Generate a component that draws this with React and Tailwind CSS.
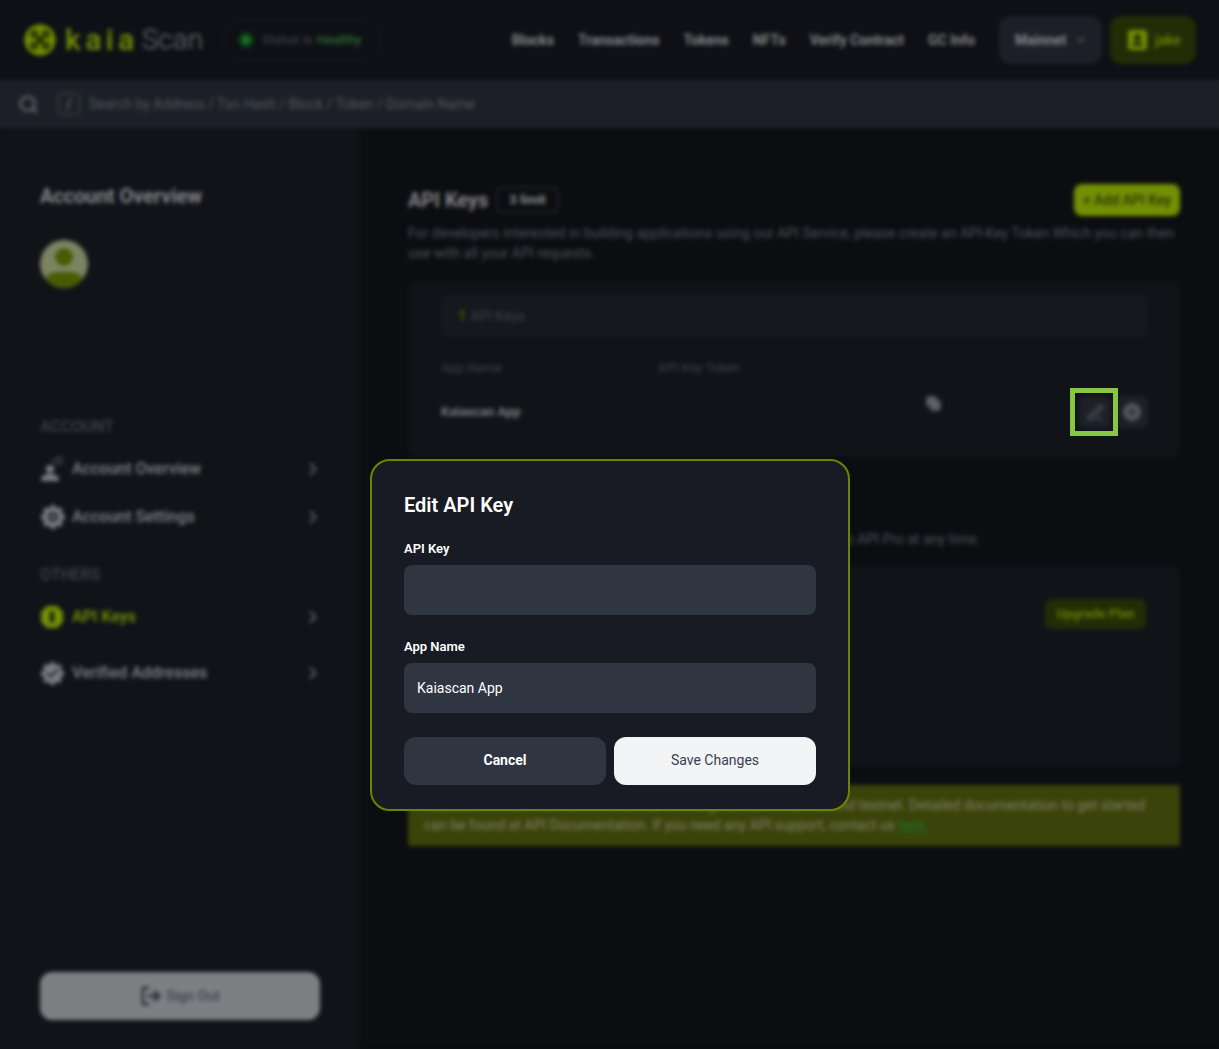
import React from 'react';
import { Search, ChevronRight, ChevronDown, Copy, PenLine, LogOut, Check } from 'lucide-react';

const NAV_LINKS = ['Blocks', 'Transactions', 'Tokens', 'NFTs', 'Verify Contract', 'GC Info'];
const GEAR_TEETH = [0, 45, 90, 135];

const KaiaMark = () => (
  <svg width="32" height="32" viewBox="0 0 32 32" className="shrink-0">
    <circle cx="16" cy="16" r="15.500" fill="#bff009" />
    <path d="M10 10l12 12M22 10L10 22" stroke="#2f3a06" strokeWidth="3" />
    <g fill="#2f3a06">
      <circle cx="10" cy="10" r="4" />
      <circle cx="22" cy="10" r="4" />
      <circle cx="10" cy="22" r="4" />
      <circle cx="22" cy="22" r="4" />
    </g>
    <g fill="#bff009">
      <circle cx="10" cy="10" r="1.600" />
      <circle cx="22" cy="10" r="1.600" />
      <circle cx="10" cy="22" r="1.600" />
      <circle cx="22" cy="22" r="1.600" />
    </g>
  </svg>
);

const AccountIcon = () => (
  <svg width="24" height="26" viewBox="0 0 24 26" fill="#d1d5db" className="shrink-0">
    <circle cx="10" cy="13" r="4" />
    <path d="M1 25c0-5 3-7 9-7s9 2 9 7z" />
    <path d="M12 6c3-3 6-4 11-4M15 9c2-1.600 4-2.500 8-2.500" fill="none" stroke="#9ca3af" strokeWidth="1.500" />
  </svg>
);

// Solid cog: body, four crossing bars for the teeth, dark ring in the middle
const GearIcon = ({ size = 26, fill = '#d1d5db', hole = '#1c2028' }) => (
  <svg width={size} height={size} viewBox="0 0 26 26" className="shrink-0">
    <circle cx="13" cy="13" r="9.500" fill={fill} />
    {GEAR_TEETH.map((angle) => (
      <rect key={angle} x="10.500" y="1" width="5" height="24" rx="1" fill={fill} transform={`rotate(${angle} 13 13)`} />
    ))}
    <circle cx="13" cy="13" r="5" fill={hole} />
    <circle cx="13" cy="13" r="2.500" fill={fill} />
  </svg>
);

const KeyBadge = () => (
  <svg width="24" height="24" viewBox="0 0 24 24" className="shrink-0">
    <path d="M7 1h10l6 6v10l-6 6H7l-6-6V7z" fill="#bff009" />
    <rect x="10" y="6" width="4" height="12" rx="2" fill="#1c2028" />
  </svg>
);

const VerifiedIcon = () => (
  <span className="relative w-6 h-6 flex items-center justify-center shrink-0">
    <GearIcon size={25} hole="#d1d5db" />
    <Check size={15} strokeWidth={3} className="absolute text-[#1c2028]" />
  </span>
);

const SideItem = ({ icon, label, active, className = '' }) => (
  <div className={`flex items-center h-6 ${className}`}>
    <div className="w-[32px] flex items-center">{icon}</div>
    <span className={`text-base font-medium ${active ? 'text-[#bff009]' : 'text-[#d1d5db]'}`}>{label}</span>
    <ChevronRight size={20} strokeWidth={2.5} className="ml-auto mr-[-3px] text-[#9ca3af]" />
  </div>
);

const Header = () => (
  <header className="h-20 bg-[#181b23] flex items-center pl-6 pr-[23px] shrink-0">
    <KaiaMark />
    <span className="ml-[9px] text-[30px] leading-none font-medium tracking-[4.500px] text-[#bff009]">kaia</span>
    <span className="ml-[3px] text-[28px] leading-none font-light text-[#b5b8bd]">Scan</span>
    <div className="ml-[20px] h-[42px] w-[158px] rounded-full border border-[#2a2e38] flex items-center pl-[14px] text-[13px] font-medium">
      <span className="w-4 h-4 rounded-full bg-[#14611f] mr-2 shrink-0 flex items-center justify-center">
        <span className="w-2 h-2 rounded-full bg-[#2fc043]" />
      </span>
      <span className="text-[#5b6472] mr-1">Status is</span>
      <span className="text-[#4caf50]">Healthy</span>
    </div>
    <nav className="ml-auto flex items-center gap-[24px] text-[14px] font-semibold text-[#e5e7eb]">
      {NAV_LINKS.map((link) => (
        <a key={link}>{link}</a>
      ))}
    </nav>
    <div className="ml-6 w-[103px] h-12 rounded-xl bg-[#2f3541] flex items-center pl-4 text-[14px] font-semibold text-[#e5e7eb]">
      Mainnet
      <ChevronDown size={14} className="ml-2 text-[#9ca3af]" />
    </div>
    <div className="ml-2 w-[86px] h-12 rounded-xl bg-[#3c4a0a] flex items-center pl-[18px] text-[14px] font-semibold text-[#a8d408]">
      <span className="w-[19px] h-[20px] rounded-[3px] bg-[#bff009] mr-2 flex flex-col items-center justify-center gap-[1px] shrink-0">
        <span className="w-[7px] h-[7px] rounded-full bg-[#3c4a0a]" />
        <span className="w-[11px] h-[4px] rounded-t-sm bg-[#3c4a0a]" />
      </span>
      jake
    </div>
  </header>
);

const SearchBar = () => (
  <div className="h-12 bg-[#2f3541] flex items-center pl-[18px] shrink-0">
    <Search size={21} strokeWidth={2.2} className="text-[#c4c8cf]" />
    <span className="ml-[19px] w-[22px] h-[22px] rounded border border-[#7b8494] flex items-center justify-center text-sm text-[#d1d5db]">/</span>
    <span className="ml-[9px] text-[14px] text-[#858d9c]">Search by Address / Txn Hash / Block / Token / Domain Name</span>
  </div>
);

const Sidebar = () => (
  <aside className="w-[360px] shrink-0 bg-[#1c2028] border-r border-[#181b23] pl-10 pr-[39px] pb-[29px] flex flex-col">
    <h2 className="mt-[54px] text-xl leading-7 font-semibold text-[#e5e7eb]">Account Overview</h2>
    <div className="mt-[30px] w-12 h-12 rounded-full bg-[#d2dba5] overflow-hidden flex flex-col items-center shrink-0">
      <span className="mt-[8px] w-[18px] h-[18px] rounded-full bg-[#7a9a08] shrink-0" />
      <span className="mt-[6px] w-[44px] h-[30px] rounded-full bg-[#7a9a08] shrink-0" />
    </div>
    <div className="mt-[96px] border-t border-[#262a33]" />
    <div className="mt-[30px] text-base leading-6 font-medium text-[#636c7b]">ACCOUNT</div>
    <SideItem className="mt-[18px]" icon={<AccountIcon />} label="Account Overview" />
    <SideItem className="mt-[24px]" icon={<GearIcon />} label="Account Settings" />
    <div className="mt-[34px] text-base leading-6 font-medium text-[#636c7b]">OTHERS</div>
    <SideItem className="mt-[18px]" icon={<KeyBadge />} label="API Keys" active />
    <SideItem className="mt-[32px]" icon={<VerifiedIcon />} label="Verified Addresses" />
    <button className="mt-auto h-12 rounded-xl bg-[#d1d5db] flex items-center justify-center gap-1 text-sm font-medium text-[#6b7280]">
      <LogOut size={22} strokeWidth={2.5} className="text-[#374151]" />
      Sign Out
    </button>
  </aside>
);

const MainContent = () => (
  <main className="flex-1 min-w-0 bg-[#14161c] pl-[48px] pr-[39px]">
    <div className="mt-[56px] flex items-center h-8">
      <h2 className="text-xl font-semibold text-[#e5e7eb]">API Keys</h2>
      <span className="ml-[9px] w-[61px] h-[26px] rounded border border-[#4b5563] flex items-center justify-center text-[13px] font-bold text-[#e5e7eb]">3 limit</span>
      <button className="ml-auto w-[106px] h-8 rounded-lg bg-[#bff009] text-sm font-medium text-[#4b5b07]">+ Add API Key</button>
    </div>
    <p className="mt-[7px] text-sm leading-5 text-[#7b8494]">
      For developers interested in building applications using our API Service, please create an API-Key Token Which you can then use with all your API requests.
    </p>
    <section className="mt-[19px] h-[175px] rounded-lg bg-[#1c2028] px-8 pt-[13px]">
      <div className="h-[42px] rounded bg-[#24282f] flex items-center px-[18px] text-sm text-[#636c7b]">
        <span className="text-[#7a9a08] font-semibold mr-1">1</span> API Keys
      </div>
      <div className="mt-[23px] h-[24px] flex text-[13px] leading-4 text-[#636c7b] border-b border-[#2a2e38]">
        <span className="pl-px w-[218px]">App Name</span>
        <span>API Key Token</span>
      </div>
      <div className="h-[56px] flex items-center text-[13px] font-semibold text-[#d1d5db]">
        <span className="pl-px w-[486px]">Kaiascan App</span>
        <Copy size={15} strokeWidth={3} className="mb-[18px] text-[#9ca3af] fill-[#9ca3af]" />
        <span className="ml-auto w-8 h-8 rounded-md bg-[#2f3541] flex items-center justify-center">
          <PenLine size={17} strokeWidth={2} className="text-[#9ca3af]" />
        </span>
        <span className="ml-[5px] w-8 h-8 rounded-md bg-[#2f3541] flex items-center justify-center">
          <GearIcon size={20} fill="#9ca3af" hole="#2f3541" />
        </span>
      </div>
    </section>
    <p className="mt-[72px] text-sm leading-5 text-right pr-[200px] text-[#7b8494]">Upgrade to API Pro at any time.</p>
    <section className="mt-[17px] h-[201px] rounded-lg bg-[#1c2028] pt-[33px] pl-8 pr-[34px] flex justify-end">
      <button className="w-[101px] h-[30px] rounded-md bg-[#3c4a0a] text-[13px] font-semibold text-[#a8d408]">Upgrade Plan</button>
    </section>
    <div className="mt-[18px] h-[61px] bg-[#62700f] px-4 pb-0.5 flex items-center text-sm leading-5 text-[#cdd3b0]">
      <p>
        Kaiascan API services are offered free of charge on both mainnet and testnet. Detailed documentation to get started can be found at API Documentation. If you need any API support, contact us <a className="underline text-[#2fb84a]">here.</a>
      </p>
    </div>
  </main>
);

const EditKeyModal = () => (
  <div className="fixed inset-0 bg-black/40 backdrop-blur-[2px] flex justify-center items-start pt-[459px] pl-px font-['Roboto',sans-serif]">
    {/* marker around the edit button the dialog was opened from */}
    <div className="absolute left-[1070px] top-[388px] w-12 h-12 border-[5px] border-[#88c540]" />
    <div className="w-[480px] h-[352px] rounded-[20px] border-2 border-[#6b8500] bg-[#181b23] px-8 pt-[30px]">
      <h3 className="text-xl leading-7 font-semibold text-white">Edit API Key</h3>
      <label className="block mt-[20px] text-[13px] leading-5 font-semibold text-white">API Key</label>
      <input className="block mt-[6px] w-full h-[50px] rounded-lg bg-[#2f3541] px-[13px] text-sm text-white outline-none" />
      <label className="block mt-[22px] text-[13px] leading-5 font-semibold text-white">App Name</label>
      <input
        readOnly
        value="Kaiascan App"
        className="block mt-[6px] w-full h-[50px] rounded-lg bg-[#2f3541] px-[13px] text-sm text-white outline-none"
      />
      <div className="mt-6 grid grid-cols-2 gap-2">
        <button className="h-12 pb-0.5 rounded-xl bg-[#2f3541] text-sm font-bold text-white">Cancel</button>
        <button className="h-12 pb-0.5 rounded-xl bg-[#f3f4f6] text-sm text-[#374151]">Save Changes</button>
      </div>
    </div>
  </div>
);

export default function App() {
  return (
    <div className="h-[1049px] flex flex-col font-['Roboto',sans-serif] overflow-hidden">
      <Header />
      <SearchBar />
      <div className="flex flex-1 min-h-0">
        <Sidebar />
        <MainContent />
      </div>
      <EditKeyModal />
    </div>
  );
}
